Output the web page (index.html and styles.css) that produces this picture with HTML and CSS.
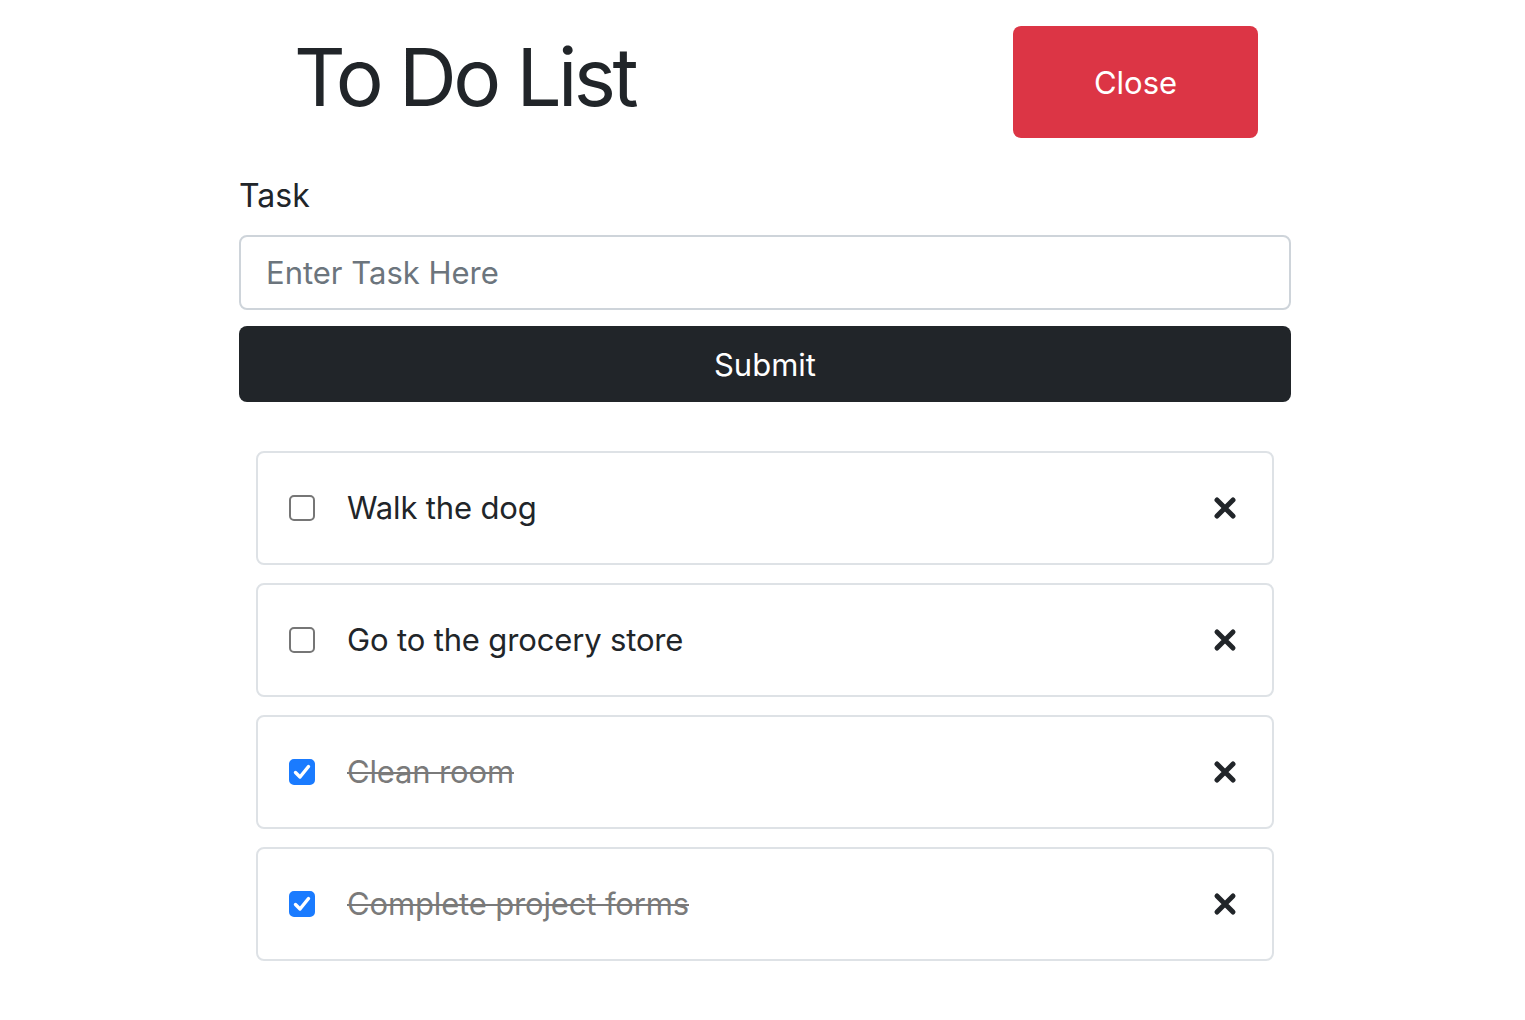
FILE: index.html
```html
<!DOCTYPE html>
<html lang="en">
<head>
<meta charset="utf-8">
<title>To Do List</title>
<link rel="stylesheet" href="styles.css">
</head>
<body>
<div class="app">
  <header class="header">
    <h1 class="title">To Do List</h1>
    <button class="btn btn-close-app">Close</button>
  </header>
  <form class="task-form">
    <label class="label" for="task">Task</label>
    <input class="input" id="task" type="text" placeholder="Enter Task Here">
    <button class="btn btn-submit" type="button">Submit</button>
  </form>
  <ul class="list">
    <li class="item">
      <span class="check"></span>
      <span class="text">Walk the dog</span>
      <svg class="x" viewBox="0 0 24 24"><path d="M4 4L20 20M20 4L4 20"/></svg>
    </li>
    <li class="item">
      <span class="check"></span>
      <span class="text">Go to the grocery store</span>
      <svg class="x" viewBox="0 0 24 24"><path d="M4 4L20 20M20 4L4 20"/></svg>
    </li>
    <li class="item done">
      <span class="check checked"><svg viewBox="0 0 26 26"><path d="M6.5 13.5L11 18L19.5 7.5"/></svg></span>
      <span class="text">Clean room</span>
      <svg class="x" viewBox="0 0 24 24"><path d="M4 4L20 20M20 4L4 20"/></svg>
    </li>
    <li class="item done">
      <span class="check checked"><svg viewBox="0 0 26 26"><path d="M6.5 13.5L11 18L19.5 7.5"/></svg></span>
      <span class="text">Complete project forms</span>
      <svg class="x" viewBox="0 0 24 24"><path d="M4 4L20 20M20 4L4 20"/></svg>
    </li>
  </ul>
</div>
</body>
</html>
```
FILE: styles.css
```css
* { box-sizing: border-box; }
body {
  margin: 0;
  background: #fff;
  font-family: Inter, "Noto Sans", sans-serif;
  color: #212529;
}
.app {
  width: 1052px;
  margin-left: 239px;
}
.header {
  display: flex;
  justify-content: space-between;
  align-items: flex-start;
  padding: 26px 33px 0 55px;
}
.title {
  margin: 2px 0 0;
  font-size: 80px;
  font-weight: 400;
  line-height: 97px;
  letter-spacing: -3.6px;
}
.btn {
  border: none;
  font-family: inherit;
  color: #fff;
  border-radius: 8px;
  cursor: pointer;
}
.btn-close-app {
  width: 245px;
  height: 112px;
  background: #dc3545;
  font-size: 31px;
}
.task-form {
  display: flex;
  flex-direction: column;
}
.label {
  margin-top: 38px;
  font-size: 32px;
  line-height: 39px;
}
.input {
  margin-top: 20px;
  height: 75px;
  border: 2px solid #ced4da;
  border-radius: 8px;
  padding: 0 25px;
  font-family: inherit;
  font-size: 31px;
  color: #212529;
}
.input::placeholder { color: #6c757d; }
.btn-submit {
  margin-top: 16px;
  height: 76px;
  background: #212529;
  font-size: 31px;
}
.list {
  list-style: none;
  margin: 49px 17px 0;
  padding: 0;
  display: flex;
  flex-direction: column;
  gap: 18px;
}
.item {
  height: 114px;
  border: 2px solid #dee2e6;
  border-radius: 8px;
  display: flex;
  align-items: center;
  padding: 0 35px 0 31px;
}
.check {
  width: 26px;
  height: 26px;
  border: 2px solid #767676;
  border-radius: 5px;
  flex: none;
  display: flex;
}
.check.checked {
  background: #1a7bff;
  border-color: #1a7bff;
}
.check svg {
  width: 26px;
  height: 26px;
  margin: -2px;
  fill: none;
  stroke: #fff;
  stroke-width: 3.4;
  stroke-linecap: round;
  stroke-linejoin: round;
}
.text {
  margin-left: 32px;
  flex: 1;
  font-size: 31px;
  line-height: 40px;
  letter-spacing: -0.15px;
}
.done .text {
  color: #7a7a7a;
  text-decoration: line-through;
  text-decoration-thickness: 2px;
}
.x {
  width: 24px;
  height: 24px;
  fill: none;
  stroke: #212529;
  stroke-width: 5;
  stroke-linecap: round;
}
```
